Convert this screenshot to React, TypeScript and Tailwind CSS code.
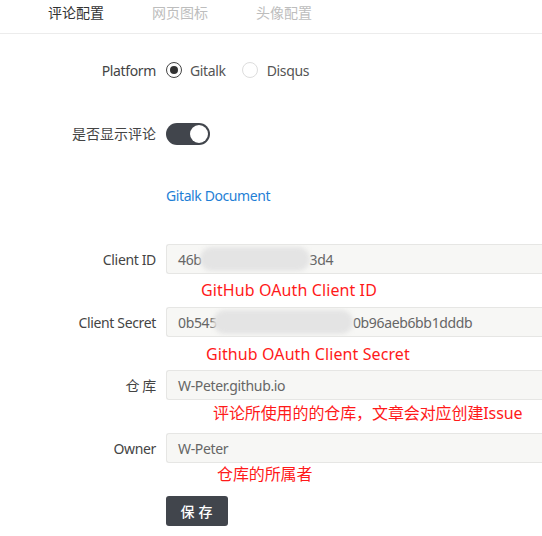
import React from "react";

const font = { fontFamily: '"Noto Sans", "Noto Sans CJK SC", sans-serif' };

function Blur({ w }: { w: number }) {
  return (
    <span
      className="inline-block h-[24px] rounded-full bg-[#e4e4e4] blur-[2px] align-middle"
      style={{ width: w }}
    />
  );
}

function InputRow({ label, children }: { label: string; children: React.ReactNode }) {
  return (
    <div className="flex h-[30px] items-center">
      <div className="w-[156px] text-right text-[14px] tracking-[-0.35px] text-[#444]">{label}</div>
      <div className="ml-[10px] flex h-[30px] flex-1 items-center overflow-hidden whitespace-nowrap rounded-l-[3px] border border-r-0 border-[#e6e6e4] bg-[#f7f7f5] pl-[11px] text-[14px] tracking-[-0.35px] text-[#666]">
        {children}
      </div>
    </div>
  );
}

function Note({ pl, pt, text, latin }: { pl: number; pt: number; text: string; latin?: boolean }) {
  return (
    <div className="h-[33px]">
      <div
        className={
          latin
            ? "ml-[166px] text-[16px] leading-[22px] tracking-[0.1px] text-[#ff1a1a]"
            : "ml-[166px] text-[16px] leading-[22px] tracking-[-0.1px] text-[#ff1a1a]"
        }
        style={{ paddingLeft: pl, paddingTop: pt }}
      >
        {text}
      </div>
    </div>
  );
}

export default function App() {
  return (
    <div className="h-[536px] w-[542px] overflow-hidden bg-white" style={font}>
      <div className="flex h-[34px] border-b border-[#ececec] pl-[24px] pt-[2px]">
        <div className="px-[24px] text-[14px] leading-[22px] text-[#333]">评论配置</div>
        <div className="px-[24px] text-[14px] leading-[22px] text-[#bdbdbd]">网页图标</div>
        <div className="px-[24px] text-[14px] leading-[22px] text-[#bdbdbd]">头像配置</div>
      </div>

      <div className="mt-[25px] flex h-[22px] items-center">
        <div className="w-[156px] text-right text-[14px] tracking-[-0.35px] text-[#444]">Platform</div>
        <div className="ml-[10px] flex items-center">
          <span className="flex h-[16px] w-[16px] items-center justify-center rounded-full border border-[#444]">
            <span className="h-[8px] w-[8px] rounded-full bg-[#333]" />
          </span>
          <span className="ml-[8px] text-[14px] tracking-[-0.35px] text-[#555]">Gitalk</span>
          <span className="ml-[16px] h-[16px] w-[16px] rounded-full border border-[#ddd]" />
          <span className="ml-[9px] text-[14px] tracking-[-0.35px] text-[#555]">Disqus</span>
        </div>
      </div>

      <div className="mt-[41px] flex h-[22px] items-center">
        <div className="w-[156px] text-right text-[14px] text-[#444]">是否显示评论</div>
        <div className="ml-[10px] mt-[2px] flex h-[22px] w-[44px] items-center justify-end rounded-full bg-[#41454c] pr-[2px]">
          <span className="h-[18px] w-[18px] rounded-full bg-white" />
        </div>
      </div>

      <div className="ml-[166px] mt-[41px] h-[22px] text-[14px] leading-[22px] tracking-[-0.4px] text-[#1f7fd6]">
        Gitalk Document
      </div>

      <div className="mt-[37px]">
        <InputRow label="Client ID">
          <span>46b</span>
          <span className="-ml-[2px]"><Blur w={110} /></span>
          <span>3d4</span>
        </InputRow>
        <Note pl={35} pt={5} text="GitHub OAuth Client ID" latin />
        <InputRow label="Client Secret">
          <span>0b545</span>
          <span className="-ml-[4px]"><Blur w={140} /></span>
          <span>0b96aeb6bb1dddb</span>
        </InputRow>
        <Note pl={40} pt={6} text="Github OAuth Client Secret" latin />
        <InputRow label="仓 库">W-Peter.github.io</InputRow>
        <Note pl={47} pt={2} text="评论所使用的的仓库，文章会对应创建Issue" />
        <InputRow label="Owner">W-Peter</InputRow>
        <Note pl={51} pt={0} text="仓库的所属者" />
        <button className="ml-[166px] flex h-[30px] w-[62px] items-center justify-center rounded-[3px] bg-[#41454c] pl-[3px] text-[14px] font-medium tracking-[4px] text-white">
          保存
        </button>
      </div>
    </div>
  );
}
